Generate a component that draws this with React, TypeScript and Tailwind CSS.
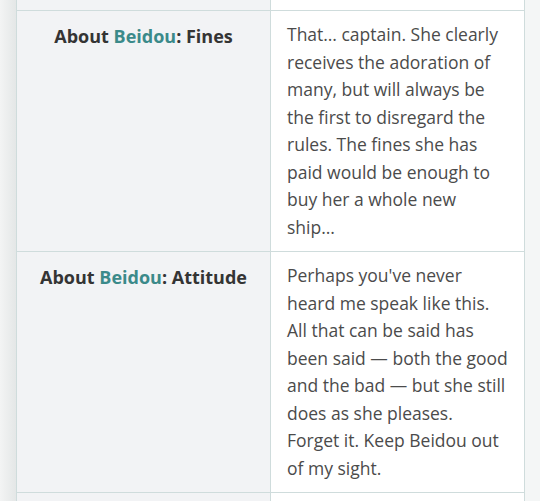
import React from 'react';

// lines kept as in the source layout so the wrapping matches
const rows = [
  {
    topic: 'Fines',
    lines: [
      'That… captain. She clearly',
      'receives the adoration of',
      'many, but will always be',
      'the first to disregard the',
      'rules. The fines she has',
      'paid would be enough to',
      'buy her a whole new',
      'ship…',
    ],
  },
  {
    topic: 'Attitude',
    lines: [
      "Perhaps you've never",
      'heard me speak like this.',
      'All that can be said has',
      'been said — both the good',
      'and the bad — but she still',
      'does as she pleases.',
      'Forget it. Keep Beidou out',
      'of my sight.',
    ],
  },
];

function Row({ topic, lines }: { topic: string; lines: string[] }) {
  return (
    <div className="flex border-b border-[#cfdcdc]">
      <div className="w-[254px] shrink-0 bg-[#f2f3f5] border-r border-[#cfdcdc] px-2 pt-[14px] text-center font-bold text-[18px] leading-[22px] text-[#343434] whitespace-nowrap">
        About <span className="text-[#3b8a8a]">Beidou</span>: {topic}
      </div>
      <div className="flex-1 bg-white pl-[16px] pr-[10px] py-[10px] text-[17.5px] leading-[27.5px] text-[#4b4b4b]">
        {lines.map((l, i) => (
          <span key={i} className="block whitespace-nowrap">
            {l}
          </span>
        ))}
      </div>
    </div>
  );
}

export default function App() {
  return (
    <div
      className="flex w-[540px] h-[501px] overflow-hidden bg-[#f6f7f7]"
      style={{ fontFamily: '"Open Sans", "Noto Sans", sans-serif' }}
    >
      <div className="w-[16px] shrink-0 bg-gradient-to-r from-[#f3f4f4] to-[#e4e7e7]" />
      <div className="w-[509px] shrink-0 flex flex-col border-l border-r border-[#cfdcdc]">
        <div className="flex h-[11px] shrink-0 border-b border-[#cfdcdc]">
          <div className="w-[254px] shrink-0 bg-[#f2f3f5] border-r border-[#cfdcdc]" />
          <div className="flex-1 bg-white" />
        </div>
        {rows.map((r) => (
          <Row key={r.topic} topic={r.topic} lines={r.lines} />
        ))}
        <div className="flex flex-1">
          <div className="w-[254px] shrink-0 bg-[#f2f3f5] border-r border-[#cfdcdc]" />
          <div className="flex-1 bg-white" />
        </div>
      </div>
      <div className="flex-1 bg-[#f4f6f6]" />
    </div>
  );
}
